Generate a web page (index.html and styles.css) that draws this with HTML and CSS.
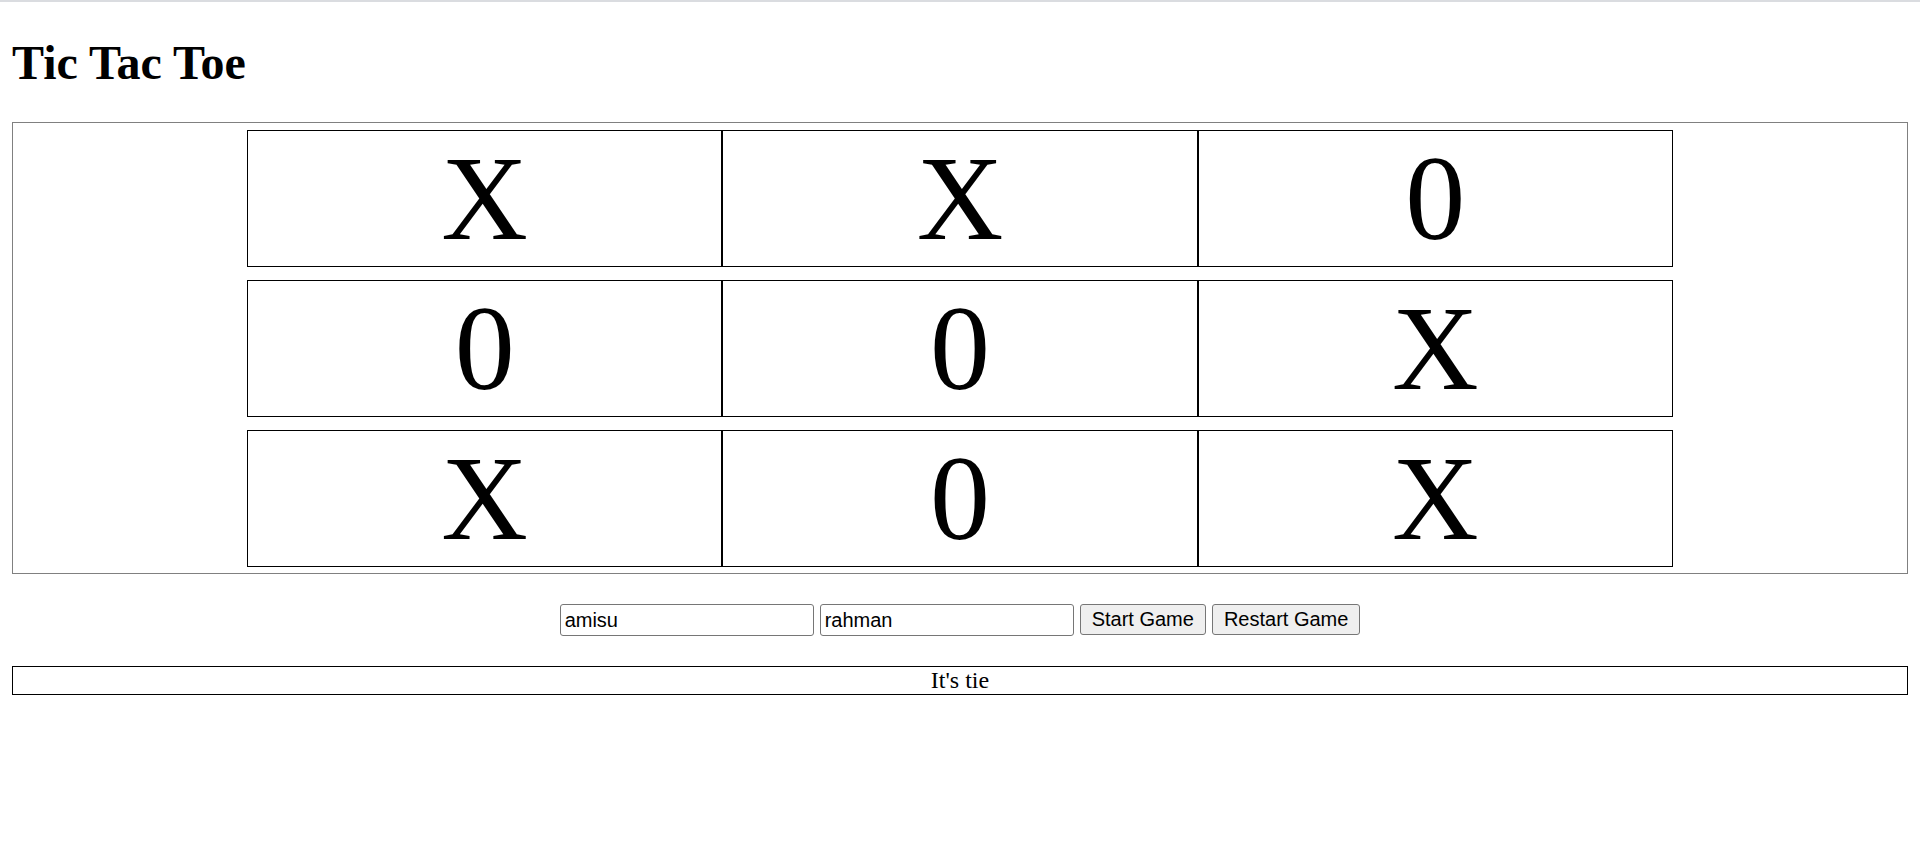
FILE: index.html
```html
<!DOCTYPE html>
<html lang="en">
<head>
<meta charset="utf-8">
<title>Tic Tac Toe</title>
<link rel="stylesheet" href="styles.css">
</head>
<body>
<h1 class="title">Tic Tac Toe</h1>
<div class="board-wrap">
  <div class="board">
    <div class="cell">X</div>
    <div class="cell">X</div>
    <div class="cell">0</div>
    <div class="cell">0</div>
    <div class="cell">0</div>
    <div class="cell">X</div>
    <div class="cell">X</div>
    <div class="cell">0</div>
    <div class="cell">X</div>
  </div>
</div>
<div class="controls">
  <input class="field" type="text" value="amisu">
  <input class="field" type="text" value="rahman">
  <button class="btn" type="button">Start Game</button>
  <button class="btn" type="button">Restart Game</button>
</div>
<div class="status">It's tie</div>
</body>
</html>
```
FILE: styles.css
```css
html {
  border-top: 2px solid #dadce0;
  background: #ffffff;
}
body {
  margin: 0 12px 12px;
  font-family: "Liberation Serif", "Times New Roman", serif;
  color: #000000;
}
.title {
  margin: 34px 0 33px;
  font-size: 48px;
  font-weight: bold;
  line-height: 53px;
}
.board-wrap {
  border: 1px solid #808080;
  padding: 7px 0 6px;
}
.board {
  width: 1426px;
  margin: 0 auto;
  display: grid;
  grid-template-columns: repeat(3, 1fr);
  row-gap: 13px;
}
.cell {
  border: 1px solid #000000;
  height: 137px;
  box-sizing: border-box;
  font-size: 120px;
  line-height: 135px;
  text-align: center;
}
.controls {
  margin: 30px 0;
  display: flex;
  justify-content: center;
  align-items: flex-start;
  gap: 6px;
}
.field {
  box-sizing: border-box;
  width: 254px;
  height: 32px;
  margin: 0;
  padding: 0 4px;
  border: 1px solid #767676;
  border-radius: 3px;
  font-family: "Liberation Sans", Arial, sans-serif;
  font-size: 20px;
  color: #000000;
  background: #ffffff;
}
.btn {
  box-sizing: border-box;
  height: 31px;
  margin: 0;
  padding: 0 11px;
  border: 1px solid #767676;
  border-radius: 3px;
  background: #efefef;
  font-family: "Liberation Sans", Arial, sans-serif;
  font-size: 20px;
  color: #000000;
}
.status {
  border: 1px solid #000000;
  text-align: center;
  font-size: 24px;
  line-height: 27px;
}
```
